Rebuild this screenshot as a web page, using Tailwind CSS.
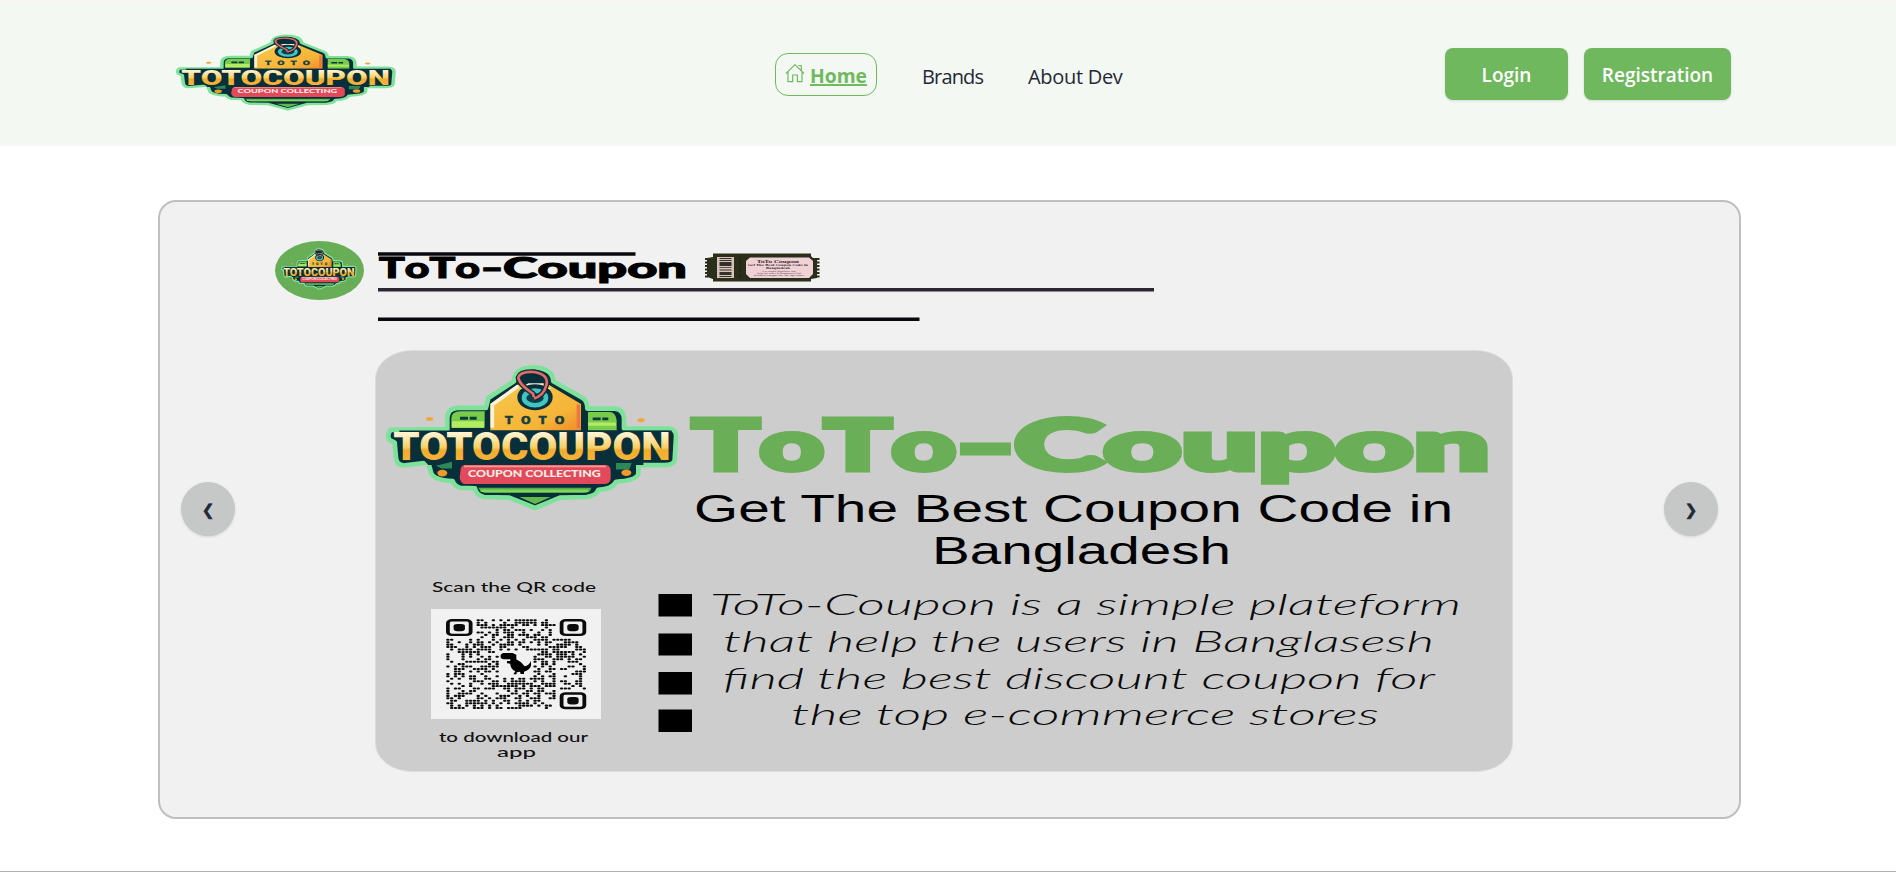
<!DOCTYPE html>
<html lang="en">
<head>
<meta charset="utf-8">
<title>ToTo-Coupon</title>
<script src="https://cdn.jsdelivr.net/npm/@tailwindcss/browser@4"></script>
</head>
<body class="h-[872px] overflow-hidden bg-white font-['Open_Sans','Noto_Sans',sans-serif] text-[#1f2937]">

<!-- Shared badge artwork -->
<svg class="absolute h-0 w-0">
  <defs>
    <linearGradient id="gold" x1="0" y1="0" x2="0" y2="1">
      <stop offset="0.2" stop-color="#fff3cf"/><stop offset="0.5" stop-color="#f8cf62"/><stop offset="0.56" stop-color="#f0ad2e"/><stop offset="0.85" stop-color="#f9b53c"/>
    </linearGradient>
    <linearGradient id="tag" x1="0" y1="0" x2="1" y2="1">
      <stop offset="0" stop-color="#f6c94c"/><stop offset="0.7" stop-color="#f5b437"/><stop offset="1" stop-color="#ef8b2a"/>
    </linearGradient>
    <symbol id="badge" viewBox="75 70 885 442" preserveAspectRatio="none">
      <path id="outline" d="M385 172 L462 122 Q462 82 520 80 Q578 82 580 122 L668 172 Q682 180 682 204 L765 204 Q790 206 792 234 L792 264 L925 264 Q950 266 948 290 L944 360 Q940 374 915 374 L835 374 L835 400 Q830 420 768 424 Q758 446 715 448 Q710 466 680 470 L600 472 L525 503 L448 472 L372 470 Q348 464 345 444 L300 442 Q285 438 278 422 Q215 420 212 392 L205 366 L130 375 Q110 374 108 352 L104 306 L88 298 Q80 284 92 268 L262 266 L262 230 Q264 204 292 202 L378 202 Z" fill="#072f3a" stroke="#7fe29b" stroke-width="14" stroke-linejoin="round"/>
      <path d="M274 262 V232 Q276 212 300 212 H374 V262 Z M684 214 H750 Q768 216 770 240 V270 H684 Z" fill="#79cc4b"/>
      <path d="M276 242 H372 V262 H276 Z M684 246 H768 V256 H684 Z" fill="#b3ec62"/>
      <path d="M300 233 H350 M698 235 H745" stroke="#0c3b3c" stroke-width="9" stroke-dasharray="24 5"/>
      <path d="M391 270 V190 L475 132 H565 L663 190 V270 Z" fill="url(#tag)"/>
      <path d="M397 262 V192 L475 136" fill="none" stroke="#fff2dd" stroke-width="11"/>
      <path d="M655 192 V262" stroke="#ee7540" stroke-width="10"/>
      <path d="M505 128 H550 L575 145 H480Z" fill="#fff0d4"/>
      <ellipse cx="525" cy="170" rx="44" ry="30" fill="none" stroke="#082f3a" stroke-width="18"/>
      <ellipse cx="525" cy="172" rx="33" ry="22" fill="#113f49" stroke="#3fc6c2" stroke-width="14"/>
      <path d="M521 169 L519 159 Q475 130 475 110 Q482 91 522 94 Q570 102 558 137 Q551 164 522 174" fill="none" stroke="#092f38" stroke-width="16"/>
      <path d="M521 169 L519 159 Q475 130 475 110 Q482 91 522 94 Q570 102 558 137 Q551 164 522 174" fill="none" stroke="#e36a68" stroke-width="8"/>
      <text x="435" y="249" textLength="178" lengthAdjust="spacing" font-family="DejaVu Sans" font-size="34" font-weight="900" fill="#173e3e" stroke="#173e3e" stroke-width="2">TOTO</text>
      <path d="M118 270 H935 V355 H850 V374 H205 L190 358 H128Z" fill="#082f3a"/>
      <text x="100" y="360" textLength="832" lengthAdjust="spacingAndGlyphs" font-family="Roboto" font-size="117" font-weight="900" fill="url(#gold)">TOTOCOUPON</text>
      <path d="M228 376 L276 364 V384 H245Z M768 368 H815 L808 387 H768Z" fill="#2c8857"/>
      <ellipse cx="247" cy="398" rx="15" ry="10" fill="#f29a29"/><ellipse cx="799" cy="397" rx="15" ry="10" fill="#f29a29"/>
      <path d="M312 374 H738 Q752 376 752 392 V416 Q750 431 732 431 H312 Q302 428 299 412 L302 385 Q304 376 312 374Z" fill="#e24a5c"/>
      <path d="M312 378 H738" stroke="#ff968e" stroke-width="5"/>
      <text x="324" y="411" textLength="398" lengthAdjust="spacingAndGlyphs" font-family="Lato" font-size="30" font-weight="900" fill="#fff1e5">COUPON COLLECTING</text>
      <path d="M355 442 H694 Q692 458 670 458 H380 Q362 458 355 442Z" fill="#54ad4d"/>
      <path d="M362 451 H685" stroke="#82d45a" stroke-width="7"/>
      <path d="M478 470 H572 L525 491Z" fill="#65b94c"/>
      <ellipse cx="209" cy="235" rx="11" ry="6" fill="#f1a63c"/><ellipse cx="843" cy="239" rx="11" ry="6" fill="#f1a63c"/>
    </symbol>
  </defs>
</svg>

<header class="h-[146px] border-t-2 border-[#fdf4f4] bg-[#f3f8f3]">
  <div class="ml-[158px] flex h-full w-[1583px] items-start justify-between pr-[10px]">
    <a class="block w-[617px] pt-8 pl-[17px]" aria-label="ToTo-Coupon">
      <svg class="h-[77px] w-[222px]"><use href="#badge" width="222" height="77"/></svg>
    </a>
    <nav class="mt-[51px] flex flex-1 items-start text-[20px] leading-[43px]">
      <a class="flex h-[43px] w-[102px] items-center rounded-[13px] border border-[#70b95f] pl-[9px] font-bold text-[#70b95f]">
        <svg class="mr-[5px] mb-[3px] h-5 w-5 shrink-0" viewBox="0 0 20 20" fill="none" stroke="currentColor" stroke-width="1.2" stroke-linejoin="round"><path d="M.8 10.600 10 1.600l9.200 9M3 8.800V18.700h4.700V12h4.700v6.700H17V8.800M13.300 2.500h3v5.200"/></svg>
        <svg class="h-[43px] w-[60px] shrink-0"><text x="0" y="29.500" textLength="57" lengthAdjust="spacingAndGlyphs" font-size="20" font-weight="700" fill="currentColor">Home</text><path d="M0 32h57" stroke="currentColor" stroke-width="2"/></svg>
      </a>
      <a class="ml-[45px] w-[61px] pt-[2px] tracking-[-0.85px] whitespace-nowrap">Brands</a>
      <a class="ml-[45px] pt-[2px] tracking-[-0.3px] whitespace-nowrap">About Dev</a>
    </nav>
    <div class="mt-[46px] flex gap-4 text-[19px] font-semibold text-white">
      <button class="h-[52px] w-[123px] rounded-lg bg-[#6fb85e] pt-[2px] shadow-sm">Login</button>
      <button class="h-[52px] w-[147px] rounded-lg bg-[#6fb85e] pt-[2px] shadow-sm">Registration</button>
    </div>
  </div>
</header>

<main class="border-b border-[#b0b0b0] pt-[54px] pb-[52px]">
  <section class="relative ml-[158px] h-[619px] w-[1583px] overflow-hidden rounded-[18px] border-2 border-[#bfbfbf] bg-[#f1f1f1]">
    <svg class="block h-[615px] w-[1579px]" viewBox="160 202 1579 615" font-family="Lato, sans-serif">
      <ellipse cx="319.500" cy="270.500" rx="44.500" ry="29.500" fill="#68ae57"/>
      <use href="#badge" x="281" y="248" width="76" height="42"/>
      <path d="M378 254H635.500M378 319.200H919.500" stroke="#08080f" stroke-width="3.500"/>
      <path d="M378 289.800H1154" stroke="#2a2733" stroke-width="3.500"/>
      <g font-size="28.500" font-weight="900" stroke="#000" stroke-width="1.100" class="[font-kerning:none]">
        <text x="379" y="277.600" textLength="101" lengthAdjust="spacingAndGlyphs">ToTo</text>
        <text x="481" y="277.600" textLength="22" lengthAdjust="spacingAndGlyphs">-</text>
        <text x="503" y="277.600" textLength="184" lengthAdjust="spacingAndGlyphs">Coupon</text>
      </g>
      <!-- Ticket -->
      <path d="M713 253.500H811V256L813 258H817V278L811 279V281.500H713V279L707 277V258L713 257Z" fill="#2a2e1b"/>
      <path d="M706.500 258V278M818 258V278" stroke="#2a2e1b" stroke-width="3" stroke-dasharray="2 1.500"/>
      <path d="M717 257H734V278H717Z" fill="#d5c2b8"/>
      <path d="M719.500 258h12v1h-12zm0 2h12v1h-12zm0 2h12v4h-12zm0 5h12v.7h-12zm0 2.500h12v1h-12zm0 2.500h12v3h-12zm0 4h12v1h-12z" fill="#332f2b"/>
      <path d="M740 257V279" stroke="#151908" stroke-dasharray="1 1"/>
      <path d="M750 257.500H809L813 261V274L809 278H750L746 274V261Z" fill="#f0d2d6"/>
      <g fill="#35292b" text-anchor="middle" font-family="DejaVu Serif">
        <text x="778" y="262.500" font-size="4" font-weight="700" textLength="42" lengthAdjust="spacingAndGlyphs">ToTo Coupon</text>
        <text x="778" y="265.800" font-size="2.800" font-weight="700" textLength="60" lengthAdjust="spacingAndGlyphs">Get The Best Coupon Code in</text>
        <text x="778" y="268.600" font-size="2.800" font-weight="700" textLength="24" lengthAdjust="spacingAndGlyphs">Bangladesh</text>
        <text x="779" y="272" font-size="2" textLength="34" lengthAdjust="spacingAndGlyphs">is a simple plateform that</text>
        <text x="779" y="274.200" font-size="2" textLength="44" lengthAdjust="spacingAndGlyphs">help the users in Banglasesh find</text>
        <text x="779" y="276.400" font-size="2" textLength="50" lengthAdjust="spacingAndGlyphs">discount coupon for the top stores</text>
      </g>

      <rect x="375.500" y="350.500" width="1137" height="421" rx="37" ry="28" fill="#cdcdcd" stroke="#dcdcdc"/>
      <use href="#badge" x="385" y="364" width="295" height="147"/>
      <g font-size="71" font-weight="900" fill="#6aaf58" stroke="#6aaf58" stroke-width="5" class="[font-kerning:none]">
        <text x="692" y="470" textLength="264" lengthAdjust="spacingAndGlyphs">ToTo</text>
        <text x="957" y="470" textLength="57" lengthAdjust="spacingAndGlyphs">-</text>
        <text x="1014" y="470" textLength="476" lengthAdjust="spacingAndGlyphs">Coupon</text>
      </g>
      <g font-family="Liberation Sans" font-size="38">
        <text x="694" y="521.700" textLength="759" lengthAdjust="spacingAndGlyphs">Get The Best Coupon Code in</text>
        <text x="932" y="563.700" textLength="299" lengthAdjust="spacingAndGlyphs">Bangladesh</text>
      </g>
      <path d="M658.500 594H692V616.500H658.500ZM658.500 633.500H692V655.500H658.500ZM658.500 672H692V694.500H658.500ZM658.500 709.500H692V732H658.500Z"/>
      <g font-size="30" font-weight="300" font-style="italic" fill="#0a0a0a">
        <text x="710" y="614.700" textLength="751" lengthAdjust="spacingAndGlyphs">ToTo-Coupon is a simple plateform</text>
        <text x="723" y="651.700" textLength="711" lengthAdjust="spacingAndGlyphs">that help the users in Banglasesh</text>
        <text x="723" y="688.700" textLength="712" lengthAdjust="spacingAndGlyphs">find the best discount coupon for</text>
        <text x="791" y="725.300" textLength="588" lengthAdjust="spacingAndGlyphs">the top e-commerce stores</text>
      </g>
      <g font-size="14" font-weight="500" fill="#111">
        <text x="432" y="592" textLength="164" lengthAdjust="spacingAndGlyphs">Scan the QR code</text>
        <text x="439" y="741.700" textLength="149" lengthAdjust="spacingAndGlyphs">to download our</text>
        <text x="497" y="757.300" textLength="39" lengthAdjust="spacingAndGlyphs">app</text>
      </g>
      <rect x="431" y="609" width="170" height="110" fill="#f1f1f1"/>
      <g id="qr" transform="translate(446 619) scale(3.790 2.440)" fill="#0b0b0b"></g>
      <path transform="translate(400 560) scale(.3333)" d="M302 284L309 279H338L349 284V298L363 307L374 319Q386 318 393 303V318Q388 331 372 335V342H362L360 335L350 337V343H340L346 334Q330 326 331 311L321 310V303H331V298H309L302 294Z" fill="#000"/>
    </svg>
    <button class="absolute top-[280px] left-[21px] size-[54px] rounded-full bg-[#c6c8c7] pt-px font-['DejaVu_Sans'] text-[15px] leading-[54px] font-bold shadow-sm [-webkit-text-stroke:0.6px_#1f2937]">❮</button>
    <button class="absolute top-[280px] right-[21px] size-[54px] rounded-full bg-[#c6c8c7] pt-px font-['DejaVu_Sans'] text-[15px] leading-[54px] font-bold shadow-sm [-webkit-text-stroke:0.6px_#1f2937]">❯</button>
  </section>
</main>

<script>
  // QR pattern: 37 x 37 modules, finders at top-left, top-right and bottom-right
  const g = document.getElementById('qr');
  let seed = 2024, out = '';
  const rnd = () => (seed = (seed * 1103515245 + 12345) % 2147483648) / 2147483648;
  for (let y = 0; y < 37; y++) for (let x = 0; x < 37; x++) {
    const on = rnd() < 0.5;
    const finder = (x < 8 && y < 8) || (x > 28 && y < 8) || (x > 28 && y > 28);
    const middle = x > 13 && x < 23 && y > 12 && y < 24;
    if (on && !finder && !middle) out += `<rect x="${x + .06}" y="${y + .08}" width=".88" height=".84" rx=".3"/>`;
  }
  for (const [x, y] of [[0, 0], [30, 0], [30, 30]])
    out += `<rect x="${x + .5}" y="${y + .5}" width="6" height="6" rx="1.1" fill="none" stroke="#0b0b0b"/><rect x="${x + 2}" y="${y + 2}" width="3" height="3" rx="1"/>`;
  g.innerHTML = out;
</script>
</body>
</html>
